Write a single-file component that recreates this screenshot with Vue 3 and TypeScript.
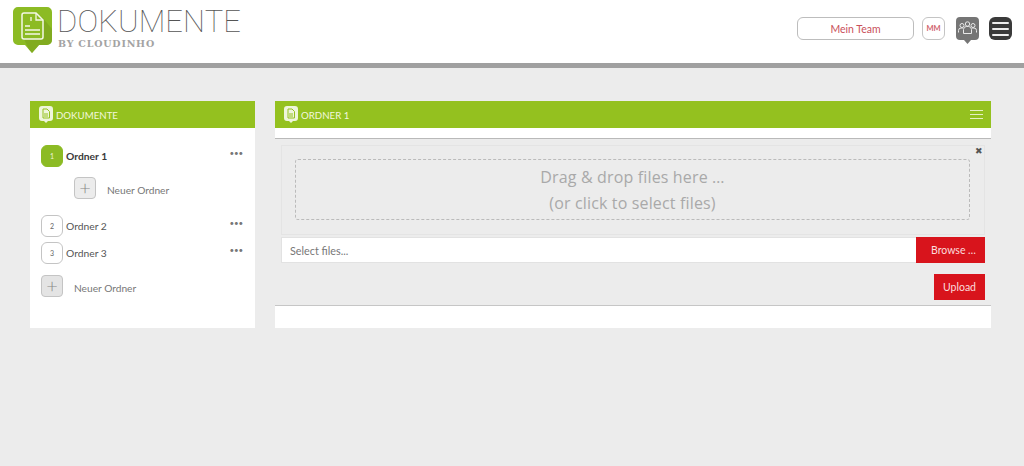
<script setup lang="ts">
interface Folder { n: number; name: string; active: boolean }
const folders: Folder[] = [
  { n: 2, name: 'Ordner 2', active: false },
  { n: 3, name: 'Ordner 3', active: false },
]
</script>

<template>
  <div class="page">
    <header class="top">
      <div class="brand">
        <svg class="logo" width="41" height="47" viewBox="0 0 41 47">
          <path d="M6 0h29a5 5 0 0 1 5 5v28a5 5 0 0 1-5 5h-8l-7 8-7-8H6a5 5 0 0 1-5-5V5a5 5 0 0 1 5-5z" fill="#8cbb24"/>
          <path d="M30 10l10 12v11a5 5 0 0 1-5 5h-8l-7 8-3-3.500L12 32z" fill="#7ba31f" opacity=".65"/>
          <path d="M12 6h12l7 7v17a2 2 0 0 1-2 2H12a2 2 0 0 1-2-2V8a2 2 0 0 1 2-2z" fill="#8cbb24" stroke="#f4f8e6" stroke-width="1.500"/>
          <path d="M24 6v7h7M13 19h5M13 23h15M13 27h15M19 10v4" fill="none" stroke="#f4f8e6" stroke-width="1.300"/>
        </svg>
        <div class="brand-text">
          <div class="brand-title">DOKUMENTE</div>
          <div class="brand-sub">BY CLOUDINHO</div>
        </div>
      </div>
      <div class="actions">
        <button class="team">Mein Team</button>
        <div class="mm">MM</div>
        <svg class="group" width="23" height="27" viewBox="0 0 23 27">
          <path d="M4 0h15a4 4 0 0 1 4 4v15a4 4 0 0 1-4 4h-4l-3.500 4L8 23H4a4 4 0 0 1-4-4V4a4 4 0 0 1 4-4z" fill="#757575"/>
          <g fill="none" stroke="#e8e8e8" stroke-width="1">
            <circle cx="6" cy="8.500" r="2"/><circle cx="11.500" cy="7" r="2.200"/><circle cx="17" cy="8.500" r="2"/>
            <path d="M2.500 15.500v-2a2.500 2.500 0 0 1 2.500-2.500h2M20.500 15.500v-2a2.500 2.500 0 0 0-2.500-2.500h-2M7.500 16.500v-4a3 3 0 0 1 3-3h2a3 3 0 0 1 3 3v4z"/>
          </g>
        </svg>
        <div class="burger"><span></span><span></span><span></span></div>
      </div>
    </header>

    <main class="content">
      <section class="panel side">
        <div class="bar">
          <svg class="bar-icon" width="14" height="17" viewBox="0 0 14 17">
            <path d="M3 0h8a3 3 0 0 1 3 3v9a3 3 0 0 1-3 3H9l-2 2-2-2H3a3 3 0 0 1-3-3V3a3 3 0 0 1 3-3z" fill="#eef5dc"/>
            <path d="M4 3h4l2.500 2.500V12H4zM5 8h4M5 10h4" fill="none" stroke="#94c11f" stroke-width="1"/>
          </svg>
          <span>DOKUMENTE</span>
        </div>
        <div class="tree">
          <div class="row first">
            <div class="badge on">1</div>
            <span class="fname strong">Ordner 1</span>
            <span class="dots">•••</span>
          </div>
          <div class="add nested">
            <div class="plus">+</div>
            <span>Neuer Ordner</span>
          </div>
          <div v-for="f in folders" :key="f.n" class="row plain">
            <div class="badge">{{ f.n }}</div>
            <span class="fname">{{ f.name }}</span>
            <span class="dots">•••</span>
          </div>
          <div class="add root">
            <div class="plus">+</div>
            <span>Neuer Ordner</span>
          </div>
        </div>
      </section>

      <section class="panel main">
        <div class="bar">
          <svg class="bar-icon" width="14" height="17" viewBox="0 0 14 17">
            <path d="M3 0h8a3 3 0 0 1 3 3v9a3 3 0 0 1-3 3H9l-2 2-2-2H3a3 3 0 0 1-3-3V3a3 3 0 0 1 3-3z" fill="#eef5dc"/>
            <path d="M4 3h4l2.500 2.500V12H4zM5 8h4M5 10h4" fill="none" stroke="#94c11f" stroke-width="1"/>
          </svg>
          <span>ORDNER 1</span>
          <div class="bar-menu"><span></span><span></span><span></span></div>
        </div>
        <div class="spacer"></div>
        <div class="well">
          <div class="drop-wrap">
            <span class="close">✖</span>
            <div class="drop">
              <div>Drag &amp; drop files here …</div>
              <div>(or click to select files)</div>
            </div>
          </div>
          <div class="file-row">
            <div class="file-input">Select files...</div>
            <button class="red browse">Browse …</button>
          </div>
          <div class="upload-row">
            <button class="red upload">Upload</button>
          </div>
        </div>
      </section>
    </main>
  </div>
</template>

<style>
html, body { margin: 0; background: #ececec; }
</style>

<style scoped>
.page { width: 1024px; height: 466px; overflow: hidden; background: #ececec; font-family: "Lato", "Open Sans", sans-serif; }
.top { box-sizing: border-box; height: 68px; background: #fff; border-bottom: 5px solid #a0a0a0; display: flex; justify-content: space-between; padding: 7px 12px 0 12px; }
.brand { display: flex; gap: 4px; align-items: flex-start; }
.brand-title { font-family: "Roboto", sans-serif; font-weight: 100; font-size: 31px; line-height: 28px; margin-top: 1px; letter-spacing: .1px; color: #555; }
.brand-sub { font-family: "DejaVu Serif", serif; font-size: 9.500px; font-weight: 700; letter-spacing: .8px; line-height: 12px; margin-top: 2px; margin-left: 1px; color: #a3a3a3; }
.actions { display: flex; align-items: flex-start; padding-top: 10px; }
.team { box-sizing: border-box; width: 117px; height: 23px; border: 1px solid #bdbdbd; border-radius: 6px; background: #fff; color: #c9505a; font: 10.500px "Lato", sans-serif; padding: 0; }
.mm { box-sizing: border-box; width: 23px; height: 23px; margin-left: 8px; border: 1px solid #c4c4c4; border-radius: 6px; color: #d0646e; font: 700 7.500px/21px "Lato", sans-serif; text-align: center; }
.group { margin-left: 11px; }
.burger { box-sizing: border-box; width: 23px; height: 23px; margin-left: 10px; border-radius: 6px; background: #3a3a3a; display: flex; flex-direction: column; justify-content: center; gap: 4px; padding: 0 3px; }
.burger span { height: 2px; background: #eee; border-radius: 1px; }

.content { display: flex; gap: 20px; padding: 33px 33px 0 30px; }
.panel { height: 227px; background: #fff; }
.side { width: 225px; flex: none; }
.main { flex: 1; display: flex; flex-direction: column; }
.bar { height: 27px; background: #94c11f; display: flex; align-items: center; gap: 3px; padding: 0 9px; color: #f1f7dd; font-size: 9.700px; }
.bar-icon { flex: none; }
.bar-menu { margin-left: auto; width: 13px; display: flex; flex-direction: column; gap: 3px; margin-right: -1px; }
.bar-menu span { height: 1px; background: #e6f0c4; }

.tree { padding: 17px 11px 0; color: #555; }
.row { display: flex; align-items: center; height: 22px; }
.row.first { margin-bottom: 10px; }
.row.plain { margin-bottom: 5px; }
.badge { box-sizing: border-box; width: 22px; height: 22px; border: 1px solid #c4c4c4; border-radius: 6px; color: #666; font-size: 7px; line-height: 20px; text-align: center; margin-right: 3px; }
.badge.on { background: #8cbb24; border-color: #8cbb24; color: #eef5dc; }
.fname { font-size: 10.300px; flex: 1; padding-bottom: 1px; }
.fname.strong { font-weight: 700; color: #3a3a3a; }
.dots { color: #777; font-size: 8px; line-height: 10px; letter-spacing: -.1px; align-self: flex-start; margin-top: 3px; margin-right: 1px; }
.add { display: flex; align-items: flex-start; font-size: 10.200px; color: #777; line-height: 22px; }
.add span { padding-top: 2px; }
.nested { padding-left: 33px; gap: 11px; margin-bottom: 14px; }
.root { margin-top: 11px; gap: 11px; }
.plus { box-sizing: border-box; width: 22px; height: 22px; border: 1px solid #c4c4c4; border-radius: 4px; background: #ececec; color: #888; font: 300 20px/18px "Lato", sans-serif; text-align: center; }
.root .plus { background: #e4e4e4; }

.spacer { height: 10px; border-bottom: 1px solid #b9b9b9; }
.well { box-sizing: border-box; height: 167px; background: #ececec; border-bottom: 1px solid #c6c6c6; padding: 6px 6px 0; }
.drop-wrap { position: relative; box-sizing: border-box; height: 90px; border: 1px solid #e4e4e4; padding: 13px 14px 0 13px; margin-bottom: 2px; }
.close { position: absolute; top: 0; right: 1px; font-size: 9px; line-height: 10px; color: #555; }
.drop { box-sizing: border-box; height: 61px; border: 1px dashed #bbb; border-radius: 3px; color: #a9a9a9; font-size: 16px; line-height: 26px; text-align: center; padding-top: 4px; font-family: "Open Sans", sans-serif; letter-spacing: .15px; }
.file-row { display: flex; height: 26px; }
.file-input { flex: 1; background: #fff; border: 1px solid #e2e2e2; border-right: 0; color: #777; font-size: 10.800px; line-height: 26px; padding-left: 8px; }
.red { border: 0; padding: 0; background: #d8141c; color: #fbdcdc; font: 10.500px "Lato", sans-serif; }
.browse { width: 69px; padding-left: 6px; }
.upload-row { display: flex; justify-content: flex-end; margin-top: 11px; }
.upload { width: 51px; height: 26px; }
</style>
